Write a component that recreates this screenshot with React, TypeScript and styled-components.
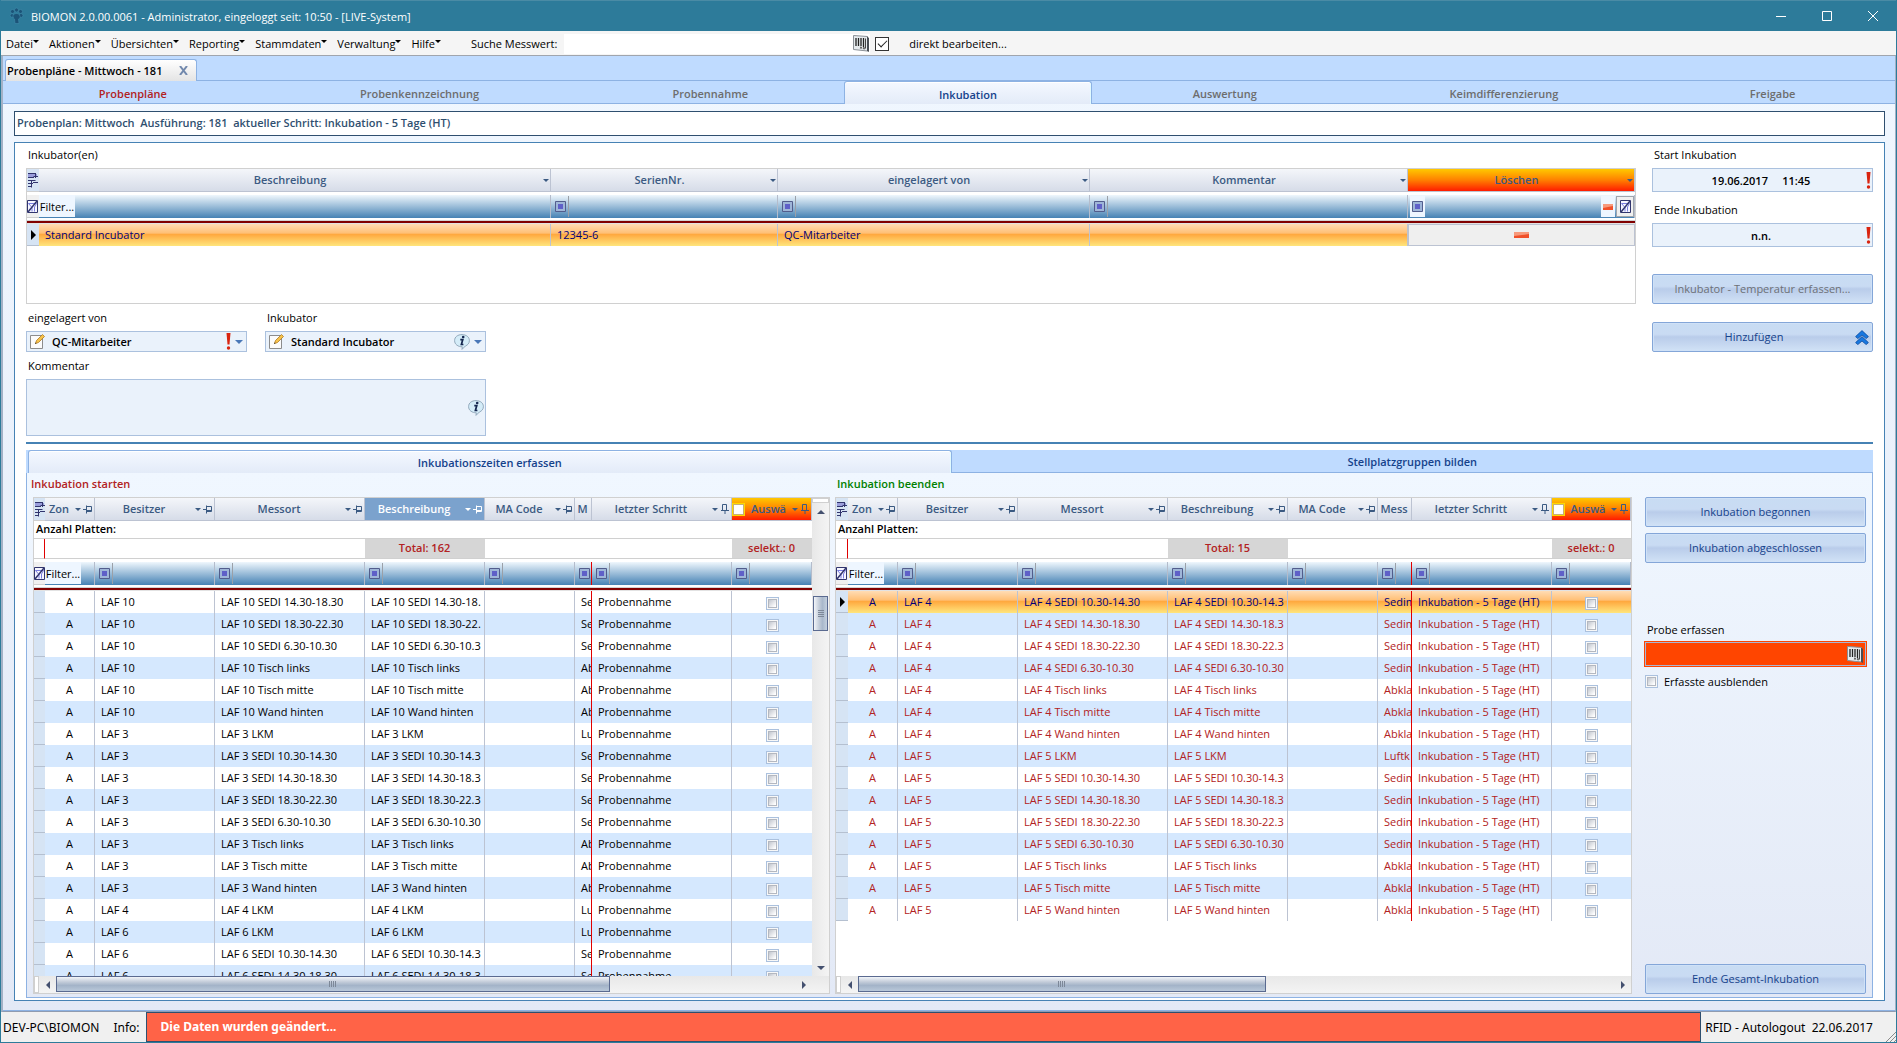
import React from "react";
import styled, { createGlobalStyle, css } from "styled-components";

const c = {
  teal: "#2d7b9a",
  navy: "#15428b",
  slate: "#2f4f6f",
  head: "#3b5a82",
  strip: "#bfdbff",
  line: "#8db2e3",
  grid: "#d0d0d0",
  col: "#bcc3d2",
  crimson: "#b22222",
  field: "#eaf2fb",
  fieldLine: "#abc1de",
};

const GlobalStyle = createGlobalStyle`
  * { box-sizing: border-box; }
  html, body { margin: 0; height: 100%; }
  body { overflow: hidden; }
  body, button, input, select, textarea {
    font-family: "Open Sans", "Noto Sans", sans-serif;
    font-size: 11px;
    color: #000;
  }
  button, input, select, textarea { margin: 0; padding: 0; border: 0; border-radius: 0; background: none; outline: 0; }
  svg { display: block; flex: none; }
`;

/* ---------- window frame ---------- */

const Window = styled.div`
  display: flex;
  flex-direction: column;
  height: 100vh;
  min-height: 800px;
  border: 1px solid ${c.teal};
  border-top: 0;
  background: #f0f0f0;
`;

const TitleBar = styled.header`
  display: flex;
  align-items: center;
  height: 31px;
  flex: none;
  padding-left: 8px;
  gap: 7px;
  background: ${c.teal};
  border-top: 1px solid #4a8ba5;
`;

const Title = styled.h1`
  flex: 1;
  margin: 0;
  font-size: 11px;
  font-weight: 400;
  color: #fff;
`;

const WindowButton = styled.button`
  display: flex;
  align-items: center;
  justify-content: center;
  width: 46px;
  height: 30px;
`;

const WindowButtons = styled.div`
  display: flex;
`;

const MenuBar = styled.nav`
  display: flex;
  align-items: center;
  height: 25px;
  flex: none;
  padding: 1px 0 0 5px;
  background: #f5f5f5;
  border-bottom: 1px solid #a0a5ad;
`;

const MenuButton = styled.button`
  display: flex;
  align-items: center;
  margin-right: 10px;
  line-height: 20px;
  svg { margin-bottom: 4px; }
`;

const SearchLabel = styled.label`
  margin-left: 20px;
  padding-right: 7px;
`;

const SearchBox = styled.div`
  display: flex;
  align-items: center;
  width: 306px;
  height: 20px;
  padding-right: 1px;
  background: #fff;
  input { flex: 1; min-width: 0; }
`;

const DirectEdit = styled.label`
  display: flex;
  align-items: center;
  gap: 20px;
  margin-left: 5px;
`;

const PlainCheck = styled.input`
  appearance: none;
  width: 14px;
  height: 14px;
  border: 1px solid #333;
  background: #fff;
  &:checked::after {
    content: "";
    display: block;
    width: 8px;
    height: 4px;
    margin: 2px;
    border-left: 1px solid #222;
    border-bottom: 1px solid #222;
    transform: rotate(-45deg);
  }
`;

const Workspace = styled.main`
  display: flex;
  flex-direction: column;
  flex: 1;
  min-height: 0;
  border-left: 2px solid #a3b1c6;
  border-right: 1px solid #a3b1c6;
  border-bottom: 1px solid #8f9bb0;
  background: linear-gradient(#f0f7ff, #e3e9f6);
`;

const DocStrip = styled.div`
  display: flex;
  align-items: flex-end;
  height: 25px;
  flex: none;
  padding-left: 2px;
  background: ${c.strip};
  border-bottom: 1px solid ${c.line};
`;

const DocTab = styled.div`
  display: flex;
  align-items: center;
  justify-content: space-between;
  width: 192px;
  height: 22px;
  margin-bottom: -1px;
  padding: 0 8px 0 1px;
  border: 1px solid ${c.line};
  border-bottom: 0;
  border-radius: 3px 3px 0 0;
  background: linear-gradient(#fff, #e4e4e4);
  font-weight: 600;
`;

const StepStrip = styled.div`
  display: flex;
  height: 23px;
  flex: none;
  background: ${c.strip};
`;

const StepTab = styled.button<{ $grow: number; $active?: boolean; $alert?: boolean; $navy?: boolean }>`
  flex: ${(p) => p.$grow} 1 0;
  min-width: 0;
  padding-top: 2px;
  font-weight: 600;
  color: ${(p) => (p.$active || p.$navy ? c.navy : p.$alert ? c.crimson : "#6d6d6d")};
  border-bottom: 1px solid ${c.line};
  ${(p) =>
    p.$active &&
    css`
      border: 1px solid ${c.line};
      border-bottom: 0;
      border-radius: 3px 3px 0 0;
      background: linear-gradient(#f4f8ff, #e3ebf8);
      box-shadow: inset 0 1px 0 #fff, inset -1px 0 0 #e2fbff;
    `}
`;

const Page = styled.div`
  display: flex;
  flex-direction: column;
  flex: 1;
  min-height: 0;
  padding: 7px 10px 9px 11px;
  gap: 6px;
  border-bottom: 1px solid ${c.line};
`;

const PlanInfo = styled.div`
  height: 25px;
  flex: none;
  padding-left: 2px;
  border: 1px solid ${c.slate};
  background: #fff;
  font-weight: 600;
  line-height: 22px;
  color: ${c.slate};
  white-space: pre;
`;

const Panel = styled.section`
  display: flex;
  flex-direction: column;
  flex: 1;
  min-height: 0;
  padding: 0 11px 2px;
  border: 1px solid #4682b4;
  background: #fff;
`;

/* ---------- upper half ---------- */

const UpperArea = styled.div`
  display: flex;
  flex: none;
  gap: 16px;
`;

const UpperMain = styled.div`
  flex: 1;
  min-width: 0;
`;

const UpperSide = styled.div`
  width: 221px;
  flex: none;
`;

const Label = styled.label`
  display: flex;
  align-items: center;
  height: 27px;
  padding-left: 2px;
  line-height: 16px;
`;

const TopLabel = styled(Label)`
  height: 25px;
  padding-bottom: 2px;
`;

const SideLabel = styled(Label)`
  height: 31px;
  padding-top: 5px;
`;

const Fields = styled.div`
  display: grid;
  grid-template-columns: 221px 221px;
  column-gap: 18px;
`;

const Wide = styled.div`
  grid-column: 1 / -1;
`;

const FieldBox = styled.div<{ $height: number }>`
  display: flex;
  align-items: center;
  height: ${(p) => p.$height}px;
  padding: 0 1px 0 3px;
  border: 1px solid ${c.fieldLine};
  background: ${c.field};
  input, select, textarea {
    flex: 1;
    min-width: 0;
    appearance: none;
    font-weight: 600;
  }
  select { padding-left: 7px; }
  input { text-align: center; }
  textarea { height: 100%; resize: none; }
`;

const FieldArrow = styled.span`
  display: flex;
  margin: 0 2px 0 4px;
`;

const ActionButton = styled.button<{ $space?: number }>`
  display: flex;
  align-items: center;
  width: 100%;
  height: 30px;
  flex: none;
  margin-top: ${(p) => p.$space ?? 0}px;
  border: 1px solid #84a6d8;
  border-radius: 2px;
  background: linear-gradient(#c8dcf3 0%, #c9dbf3 40%, #b9ccea 50%, #d1e2f6 100%);
  box-shadow: inset 0 0 0 1px #cfe1f7;
  color: ${c.navy};
  &:disabled { color: #6d7076; }
  span { flex: 1; padding-bottom: 2px; }
  svg { margin-right: 3px; }
`;

const Divider = styled.hr`
  width: 100%;
  height: 2px;
  flex: none;
  margin: 6px 0;
  border: 0;
  background: #4682b4;
`;

/* ---------- lower half ---------- */

const SubTabs = styled.div`
  display: flex;
  flex: none;
  height: 23px;
  padding-left: 2px;
  background: ${c.strip};
  button { padding-top: 0; }
`;

const TabBody = styled.div`
  display: flex;
  flex: 1;
  min-height: 0;
  padding: 0 6px 3px;
  border: 1px solid ${c.line};
  border-top: 0;
  background: linear-gradient(#f0f7ff, #e3e9f6);
`;

const GridColumn = styled.section`
  display: flex;
  flex-direction: column;
  flex: 1 1 0;
  min-width: 0;
  & + & { margin-left: 5px; }
`;

const GridTitle = styled.h2<{ $color: string; $indent: number }>`
  height: 24px;
  flex: none;
  margin: 0 0 0 ${(p) => p.$indent}px;
  font-size: 11px;
  font-weight: 600;
  line-height: 22px;
  color: ${(p) => p.$color};
`;

const SideColumn = styled.aside`
  display: flex;
  flex-direction: column;
  width: 221px;
  flex: none;
  margin-left: 13px;
  padding-top: 24px;
`;

const ProbeLabel = styled(Label)`
  margin-top: 54px;
  height: 25px;
`;

const ProbeBox = styled.div`
  display: flex;
  align-items: center;
  height: 24px;
  padding: 0 2px;
  border: 1px solid #a9b6d4;
  outline: 1px solid #ff4500;
  background: #ff4500;
  input { flex: 1; min-width: 0; }
`;

const HideLabel = styled.label`
  display: flex;
  align-items: center;
  gap: 6px;
  margin-top: 8px;
`;

const Spacer = styled.div`
  flex: 1;
`;

/* ---------- data grid ---------- */

const GridFrame = styled.div<{ $height?: number }>`
  display: flex;
  flex-direction: column;
  ${(p) => (p.$height ? `height: ${p.$height}px;` : "flex: 1; min-height: 0;")}
  border: 1px solid ${c.grid};
  background: #fff;
`;

const GridView = styled.div`
  display: flex;
  flex: 1;
  min-height: 0;
`;

const GridClip = styled.div`
  flex: 1;
  min-width: 0;
  overflow: hidden;
`;

const Table = styled.table`
  width: 100%;
  table-layout: fixed;
  border-collapse: separate;
  border-spacing: 0;
  th, td { padding: 0; overflow: hidden; white-space: nowrap; text-align: left; }
`;

type Tone = "normal" | "selected" | "alert";

const HeadCell = styled.th<{ $tone?: Tone }>`
  height: 23px;
  border-right: 1px solid ${c.col};
  border-bottom: 1px solid ${c.col};
  font-weight: 600;
  color: ${(p) => (p.$tone === "selected" ? "#fff" : c.head)};
  background: ${(p) =>
    p.$tone === "selected"
      ? "#7ba2cd"
      : p.$tone === "alert"
      ? "linear-gradient(#ffc800, #ff8000 50%, #ff1c00)"
      : "linear-gradient(#f4f6fa, #d6dce8)"};
`;

const HeadInner = styled.div`
  display: flex;
  align-items: center;
  gap: 2px;
  height: 22px;
  padding-right: 1px;
`;

const HeadText = styled.span`
  flex: 1;
  min-width: 0;
  overflow: hidden;
  text-align: center;
  line-height: 18px;
`;

const CornerCell = styled.th<{ $light?: boolean }>`
  height: 22px;
  border-bottom: 1px solid ${c.grid};
  background: ${(p) => (p.$light ? "#f0f0f0" : "#d6e4f4")};
`;

const HeadCheck = styled.input`
  appearance: none;
  width: 13px;
  height: 13px;
  flex: none;
  border: 1px solid #ffd800;
  background: #fff;
  box-shadow: inset 0 0 0 1px #c8b070;
`;

const SummaryTitle = styled.td`
  height: 18px;
  border-bottom: 1px solid ${c.grid};
  font-weight: 600;
  line-height: 15px;
  && { padding: 0 0 2px 2px; }
`;

const SummaryCell = styled.td<{ $filled?: boolean; $mark?: boolean }>`
  height: 20px;
  border-bottom: 1px solid ${c.grid};
  font-weight: 600;
  line-height: 16px;
  color: ${c.crimson};
  && { text-align: center; padding-bottom: 2px; }
  ${(p) => p.$filled && "background: #d6d6d6; border-right: 1px solid #d6d6d6;"}
  ${(p) => p.$mark && "border-right: 1px solid #e00000;"}
`;

const GapCell = styled.td`
  height: 3px;
`;

const RuleCell = styled.td`
  height: 6px;
  background: linear-gradient(#fff 0 2px, #d3d3d3 2px 3px, #800000 3px 5px, #e2e2e2 5px 6px);
`;

const FilterCell = styled.td<{ $freeze?: boolean }>`
  height: 23px;
  border-right: 1px solid ${(p) => (p.$freeze ? "#e00000" : "#b4bccb")};
  background: linear-gradient(#eff7fd, #4682b4);
`;

const FilterInner = styled.div`
  display: flex;
  align-items: center;
  height: 23px;
`;

const FilterText = styled.button`
  height: 23px;
  width: 36px;
  background: #eef6ff;
  border-bottom: 1px solid #4682b4;
`;

const FilterButton = styled.button<{ $lit?: boolean }>`
  display: flex;
  align-items: center;
  justify-content: flex-end;
  width: 18px;
  height: 21px;
  flex: none;
  padding-right: 2px;
  border-right: 1px solid #9aa0a8;
  ${(p) => p.$lit && "background: #eef6ff; margin-left: 2px; width: 15px; border: 0;"}
`;

const FilterTools = styled.div`
  display: flex;
  gap: 1px;
  margin-left: auto;
  button {
    display: flex;
    align-items: center;
    justify-content: center;
    height: 21px;
    width: 14px;
    background: #eef6ff;
  }
  button + button { width: 18px; background: #f0f0f0; border: 1px solid #a0a5ad; }
`;

const Row = styled.tr<{ $alt?: boolean; $current?: boolean; $ink: string }>`
  color: ${(p) => p.$ink};
  background: ${(p) =>
    p.$current
      ? "linear-gradient(#ffdcb4, #ffbf74 42%, #ffa73d 46%, #ffc35a 70%, #ffe57c)"
      : p.$alt
      ? "#d5e8fe"
      : "#fff"};
`;

const Cell = styled.td<{ $center?: boolean; $freeze?: boolean }>`
  height: 22px;
  line-height: 20px;
  border-right: 1px solid ${(p) => (p.$freeze ? "#e00000" : c.col)};
  &:last-child { border-right: 0; }
  && { padding-left: 6px; }
  ${(p) => p.$center && "&& { padding-left: 0; text-align: center; }"}
`;

const RowHead = styled.th`
  height: 22px;
  background: #d6e4f4;
  border-bottom: 1px solid #b5c0d0;
`;

const RowCheck = styled.input`
  appearance: none;
  display: inline-block;
  width: 13px;
  height: 13px;
  vertical-align: middle;
  border: 1px solid #abc1de;
  outline: 1px solid #b4b8c0;
  outline-offset: -3px;
  background: linear-gradient(135deg, #c4c8d0 20%, #fff 75%);
  box-shadow: inset 0 0 0 1px #f8f8f8;
`;

const DeleteButton = styled.button`
  display: flex;
  align-items: center;
  justify-content: center;
  width: 100%;
  height: 22px;
  background: #efefef;
  border: 1px solid ${c.col};
`;

/* ---------- scroll bars ---------- */

const VBar = styled.div`
  display: flex;
  flex-direction: column;
  width: 17px;
  background: linear-gradient(90deg, #e8e8e8, #f4f4f4);
`;

const HBar = styled.div<{ $corner?: boolean }>`
  display: flex;
  height: 17px;
  flex: none;
  padding-right: ${(p) => (p.$corner ? 17 : 0)}px;
  background: linear-gradient(#e8e8e8, #f4f4f4);
`;

const Splitter = styled.span<{ $vertical?: boolean }>`
  ${(p) => (p.$vertical ? "height: 5px;" : "width: 5px;")}
  flex: none;
  border: 1px solid ${c.grid};
  background: #fff;
`;

const ArrowButton = styled.button`
  display: flex;
  align-items: center;
  justify-content: center;
  width: 17px;
  height: 17px;
  flex: none;
`;

const Track = styled.div`
  flex: 1;
  display: flex;
`;

const HThumb = styled.div<{ $size: number }>`
  display: flex;
  align-items: center;
  justify-content: center;
  width: ${(p) => p.$size}%;
  height: 16px;
  border: 1px solid #5a6a90;
  background: linear-gradient(#f2f5f9, #c3ccd9 35%, #a3b3c8 60%, #b9c8d9);
`;

const VTrack = styled.div`
  flex: 1;
  padding-top: 76px;
`;

const VThumb = styled.div`
  display: flex;
  align-items: center;
  justify-content: center;
  width: 15px;
  height: 35px;
  margin-left: 1px;
  border: 1px solid #5a6a90;
  background: linear-gradient(90deg, #f2f5f9, #c3ccd9 40%, #a9b8cb 65%, #c4d0de);
`;

/* ---------- status bar ---------- */

const StatusBar = styled.footer`
  display: flex;
  align-items: center;
  height: 30px;
  flex: none;
  padding-left: 2px;
  font-family: "Noto Sans", "Open Sans", sans-serif;
  font-size: 12px;
  white-space: pre;
`;

const StatusMessage = styled.div`
  flex: 1;
  height: 30px;
  margin: 0 4px 0 6px;
  padding-left: 14px;
  border: 1px solid ${c.slate};
  background: #ff6347;
  color: #fff;
  font-weight: 700;
  line-height: 28px;
`;

const StatusInfo = styled.span`
  margin-left: 14px;
`;

const SizeGrip = styled.span`
  align-self: flex-end;
  margin-left: 12px;
`;

/* ---------- drawings ---------- */

const Logo = () => (
  <svg width="15" height="18" viewBox="0 0 15 18" fill="#1c5478" stroke="#3f8cab" strokeWidth="0.6">
    <circle cx="3.500" cy="4.500" r="2" />
    <circle cx="7.500" cy="3" r="2" />
    <circle cx="11.500" cy="4.500" r="2" />
    <circle cx="12" cy="8.500" r="2" />
    <circle cx="3" cy="8.500" r="1.800" />
    <path d="M4.500 7.500c2-1.500 5-1.500 6 .5s1 3-1 4l.5 4.500H6L5.500 12c-1.500-1-2-3-1-4.500z" />
  </svg>
);

const Caret = ({ color = c.head, w = 7 }: { color?: string; w?: number }) => (
  <svg width={w} height={w > 7 ? 4 : 3} viewBox="0 0 8 4" preserveAspectRatio="none" fill={color}>
    <path d="M0 0h8L4 4z" />
  </svg>
);

const Pin = ({ down, color = c.head }: { down?: boolean; color?: string }) => (
  <svg width="10" height="10" viewBox="0 0 10 10" fill="none" stroke={color}>
    {down ? (
      <path d="M2.500 6V.5h4V6M1 6.500h8M5 6.500V10M6.500 1v5" />
    ) : (
      <path d="M0 5.500h3.500M3.500 1.500v8M3.500 2.500h5v5h-5M3.500 6.500h5" />
    )}
  </svg>
);

const ChooserIcon = () => (
  <svg width="11" height="20" viewBox="0 0 11 20" fill="none" stroke="#31356e">
    <path d="M1 5.500h9" stroke="#9a9edc" strokeWidth="3" />
    <path d="M1 3.500h8M1 7.500h6M8.500 4v4M6.500 6.500H11M1 10.500h7.500M1 13.500h5M4.500 10.500v7M1 16.500h4M6 12.500h5" />
  </svg>
);

const ClearFilterIcon = () => (
  <svg width="11" height="13" viewBox="0 0 11 13" fill="none" stroke="#31356e">
    <path d="M.5.500h10v12H.5z" fill="#f6f6ff" />
    <path d="M1.500 3.500h8L7.500 7v4.500M1.500 3.500L5 7.500v4" stroke="#7a7ee0" />
    <path d="M1 12L10 1" strokeWidth="1.500" />
  </svg>
);

const OperatorIcon = () => (
  <svg width="11" height="11" viewBox="0 0 11 11">
    <path d="M.5.500h10v10H.5z" fill="#9fb6d8" stroke="#525d8c" />
    <path d="M3 3h5v5H3z" fill="#5f60c8" />
  </svg>
);

const MinusIcon = ({ w = 15 }: { w?: number }) => (
  <svg width={w} height="6" viewBox="0 0 15 6" preserveAspectRatio="none">
    <path d="M0 0h15v6H0z" fill="#f0502a" />
    <path d="M0 0h15v2L0 4z" fill="#f79a7c" />
  </svg>
);

const RowMarker = () => (
  <svg width="11" height="10" viewBox="0 0 11 10">
    <path d="M4 0l5 5-5 5z" />
  </svg>
);

const BarcodeIcon = () => (
  <svg width="16" height="17" viewBox="0 0 16 17">
    <path d="M.5.500l14 1v14.500l-14-1.500z" fill="#e6ebee" stroke="#8a9096" />
    <path d="M14 1.500L16 3v14l-2-1z" fill="#4a4f55" />
    <path d="M3 3v8M5.500 3v8M8 3v8M10.500 3v9" stroke="#222" strokeWidth="1.300" />
    <path d="M12.500 3.500v10" stroke="#444" />
    <path d="M7 12.500l5 1" stroke="#666" strokeWidth="2" strokeDasharray="2 1" />
  </svg>
);

const EditIcon = () => (
  <svg width="15" height="15" viewBox="0 0 15 15">
    <path d="M.5 1.500h12v13H.5z" fill="#fbfbfb" stroke="#8c8c8c" />
    <path d="M5.500 9.500l1-3 6-6 2 2-6 6z" fill="#f6c24a" stroke="#b07a20" strokeWidth="0.8" />
    <path d="M5 10l1.500-.5-1-1z" fill="#333" />
  </svg>
);

const AlertIcon = () => (
  <svg width="5" height="17" viewBox="0 0 5 17" fill="#d9240f">
    <path d="M.5 0h4l-1 11.500h-2z" />
    <circle cx="2.500" cy="15" r="1.700" />
  </svg>
);

const InfoIcon = () => (
  <svg width="16" height="16" viewBox="0 0 16 16">
    <path
      d="M8 .6c4.200 0 7.400 2.400 7.400 6 0 2.500-1.600 4.500-4 5.400L8 15.400l.3-2.600C4 12.800.6 10.400.6 6.600S3.800.6 8 .6z"
      fill="#d4ecf8"
      stroke="#8aa2b4"
      strokeWidth="0.9"
    />
    <circle cx="9.200" cy="3" r="1.300" fill="#14264e" />
    <path d="M6.300 5.600h2.500L7.400 10.500h2" fill="none" stroke="#14264e" strokeWidth="1.700" />
  </svg>
);

const ChevronsIcon = () => (
  <svg width="14" height="15" viewBox="0 0 14 15" fill="#1878e0" stroke="#0b4a9e" strokeWidth="0.8">
    <path d="M7 .6l6.400 6-2.200 2L7 5 2.800 8.600l-2.200-2z" />
    <path d="M7 6.600l6.400 6-2.200 2L7 11l-4.200 3.600-2.200-2z" />
  </svg>
);

const Arrow = ({ dir }: { dir: "up" | "down" | "left" | "right" }) => {
  const d = {
    up: "M1 7l4-4 4 4z",
    down: "M1 3l4 4 4-4z",
    left: "M7 1L3 5l4 4z",
    right: "M3 1l4 4-4 4z",
  }[dir];
  return (
    <svg width="10" height="10" viewBox="0 0 10 10" fill="#44506f">
      <path d={d} />
    </svg>
  );
};

const Ribs = ({ vertical }: { vertical?: boolean }) => (
  <svg width="8" height="8" viewBox="0 0 8 8" stroke="#7d8898">
    {vertical ? <path d="M1 .5h6M1 2.500h6M1 4.500h6M1 6.500h6" /> : <path d="M.5 1v6M2.500 1v6M4.500 1v6M6.500 1v6" />}
  </svg>
);

const Grip = () => (
  <svg width="11" height="11" viewBox="0 0 11 11" stroke="#8a8a8a">
    <path d="M1 11L11 1M5 11l6-6M9 11l2-2" />
  </svg>
);

/* ---------- data ---------- */

type Sample = { owner: string; place: string; kind: string };

const kindOf = (suffix: string) =>
  suffix === "LKM" ? "Luftke" : suffix.startsWith("SEDI") ? "Sedim" : "Abkla";

const samples = (owner: string, suffixes: string[]): Sample[] =>
  suffixes.map((s) => ({ owner, place: `${owner} ${s}`, kind: kindOf(s) }));

const SEDI = ["SEDI 10.30-14.30", "SEDI 14.30-18.30", "SEDI 18.30-22.30", "SEDI 6.30-10.30"];
const CONTACT = ["Tisch links", "Tisch mitte", "Wand hinten"];

const startRows = [
  ...samples("LAF 10", [...SEDI.slice(1), ...CONTACT]),
  ...samples("LAF 3", ["LKM", ...SEDI, ...CONTACT]),
  ...samples("LAF 4", ["LKM"]),
  ...samples("LAF 6", ["LKM", ...SEDI.slice(0, 2)]),
];

const endRows = [
  ...samples("LAF 4", [...SEDI, ...CONTACT]),
  ...samples("LAF 5", ["LKM", ...SEDI, ...CONTACT]),
];

const menu = ["Datei", "Aktionen", "Übersichten", "Reporting", "Stammdaten", "Verwaltung", "Hilfe"];

const steps = [
  { name: "Probenpläne", grow: 260, alert: true },
  { name: "Probenkennzeichnung", grow: 314 },
  { name: "Probennahme", grow: 268 },
  { name: "Inkubation", grow: 246, active: true },
  { name: "Auswertung", grow: 266 },
  { name: "Keimdifferenzierung", grow: 293 },
  { name: "Freigabe", grow: 245 },
];

/* ---------- grids ---------- */

const Operator = ({ lit }: { lit?: boolean }) => (
  <FilterButton $lit={lit} aria-label="Filteroperator">
    <OperatorIcon />
  </FilterButton>
);

const IncubatorGrid = () => {
  const heads = ["Beschreibung", "SerienNr.", "eingelagert von", "Kommentar", "Löschen"];
  return (
    <GridFrame $height={136}>
      <GridClip>
        <Table>
          <colgroup>
            <col width="12" />
            <col />
            <col width="227" />
            <col width="312" />
            <col width="318" />
            <col width="227" />
          </colgroup>
          <thead>
            <tr>
              <CornerCell>
                <ChooserIcon />
              </CornerCell>
              {heads.map((h) => (
                <HeadCell key={h} $tone={h === "Löschen" ? "alert" : "normal"}>
                  <HeadInner>
                    <HeadText>{h}</HeadText>
                    <Caret w={6} />
                  </HeadInner>
                </HeadCell>
              ))}
            </tr>
          </thead>
          <tbody>
            <tr>
              <GapCell colSpan={6} />
            </tr>
            <tr>
              <CornerCell $light>
                <ClearFilterIcon />
              </CornerCell>
              <FilterCell>
                <FilterInner>
                  <FilterText>Filter...</FilterText>
                </FilterInner>
              </FilterCell>
              {[0, 1, 2].map((i) => (
                <FilterCell key={i}>
                  <FilterInner>
                    <Operator />
                  </FilterInner>
                </FilterCell>
              ))}
              <FilterCell>
                <FilterInner>
                  <Operator lit />
                  <FilterTools>
                    <button aria-label="Löschen">
                      <MinusIcon w={10} />
                    </button>
                    <button aria-label="Filter löschen">
                      <ClearFilterIcon />
                    </button>
                  </FilterTools>
                </FilterInner>
              </FilterCell>
            </tr>
            <tr>
              <RuleCell colSpan={6} />
            </tr>
            <Row $current $ink="#00007a">
              <RowHead scope="row">
                <RowMarker />
              </RowHead>
              <Cell>Standard Incubator</Cell>
              <Cell>12345-6</Cell>
              <Cell>QC-Mitarbeiter</Cell>
              <Cell />
              <td>
                <DeleteButton aria-label="Inkubator löschen">
                  <MinusIcon />
                </DeleteButton>
              </td>
            </Row>
          </tbody>
        </Table>
      </GridClip>
    </GridFrame>
  );
};

type SampleGridProps = {
  rows: Sample[];
  total: number;
  headWidth: number;
  kindHead: string;
  kindWidth: number;
  kindChars: number;
  step: string;
  ink: string;
  thumb: number;
  selectedHead?: boolean;
  current?: number;
  vertical?: boolean;
};

const SampleGrid = (p: SampleGridProps) => {
  const heads: { name: string; tone?: Tone }[] = [
    { name: "Zon" },
    { name: "Besitzer" },
    { name: "Messort" },
    { name: "Beschreibung", tone: p.selectedHead ? "selected" : "normal" },
    { name: "MA Code" },
  ];
  return (
    <GridFrame>
      <GridView>
        <GridClip>
          <Table>
            <colgroup>
              <col width={p.headWidth} />
              <col width="50" />
              <col width="120" />
              <col width="150" />
              <col width="120" />
              <col width="90" />
              <col width={p.kindWidth} />
              <col width="140" />
              <col />
            </colgroup>
            <thead>
              <tr>
                <CornerCell>
                  <ChooserIcon />
                </CornerCell>
                {heads.map((h) => (
                  <HeadCell key={h.name} $tone={h.tone}>
                    <HeadInner>
                      <HeadText>{h.name}</HeadText>
                      <Caret w={6} color={h.tone === "selected" ? "#fff" : undefined} />
                      <Pin color={h.tone === "selected" ? "#fff" : undefined} />
                    </HeadInner>
                  </HeadCell>
                ))}
                <HeadCell>
                  <HeadInner>
                    <HeadText>{p.kindHead}</HeadText>
                  </HeadInner>
                </HeadCell>
                <HeadCell>
                  <HeadInner>
                    <HeadText>letzter Schritt</HeadText>
                    <Caret w={6} />
                    <Pin down />
                  </HeadInner>
                </HeadCell>
                <HeadCell $tone="alert">
                  <HeadInner>
                    <HeadCheck type="checkbox" aria-label="Alle auswählen" />
                    <HeadText>Auswä</HeadText>
                    <Caret w={6} />
                    <Pin down />
                  </HeadInner>
                </HeadCell>
              </tr>
            </thead>
            <tbody>
              <tr>
                <SummaryTitle colSpan={9}>Anzahl Platten:</SummaryTitle>
              </tr>
              <tr>
                <SummaryCell $mark />
                <SummaryCell colSpan={3} />
                <SummaryCell $filled>Total: {p.total}</SummaryCell>
                <SummaryCell colSpan={3} />
                <SummaryCell $filled>selekt.: 0</SummaryCell>
              </tr>
              <tr>
                <GapCell colSpan={9} />
              </tr>
              <tr>
                <CornerCell $light>
                  <ClearFilterIcon />
                </CornerCell>
                <FilterCell>
                  <FilterInner>
                    <FilterText>Filter...</FilterText>
                  </FilterInner>
                </FilterCell>
                {[0, 1, 2, 3, 4, 5, 6].map((i) => (
                  <FilterCell key={i} $freeze={i === 4}>
                    <FilterInner>
                      <Operator />
                    </FilterInner>
                  </FilterCell>
                ))}
              </tr>
              <tr>
                <RuleCell colSpan={9} />
              </tr>
              {p.rows.map((r, i) => (
                <Row key={r.place} $alt={i % 2 === 1} $current={i === p.current} $ink={i === p.current ? "#00007a" : p.ink}>
                  <RowHead scope="row">{i === p.current && <RowMarker />}</RowHead>
                  <Cell $center>A</Cell>
                  <Cell>{r.owner}</Cell>
                  <Cell>{r.place}</Cell>
                  <Cell>{r.place.slice(0, 21)}</Cell>
                  <Cell />
                  <Cell $freeze>{r.kind.slice(0, p.kindChars)}</Cell>
                  <Cell>{p.step}</Cell>
                  <Cell $center>
                    <RowCheck type="checkbox" aria-label={`${r.place} auswählen`} />
                  </Cell>
                </Row>
              ))}
            </tbody>
          </Table>
        </GridClip>
        {p.vertical && (
          <VBar>
            <Splitter $vertical />
            <ArrowButton aria-label="Nach oben">
              <Arrow dir="up" />
            </ArrowButton>
            <VTrack>
              <VThumb>
                <Ribs vertical />
              </VThumb>
            </VTrack>
            <ArrowButton aria-label="Nach unten">
              <Arrow dir="down" />
            </ArrowButton>
          </VBar>
        )}
      </GridView>
      <HBar $corner={p.vertical}>
        <Splitter />
        <ArrowButton aria-label="Nach links">
          <Arrow dir="left" />
        </ArrowButton>
        <Track>
          <HThumb $size={p.thumb}>
            <Ribs />
          </HThumb>
        </Track>
        <ArrowButton aria-label="Nach rechts">
          <Arrow dir="right" />
        </ArrowButton>
      </HBar>
    </GridFrame>
  );
};

/* ---------- page ---------- */

export default function App() {
  return (
    <>
      <GlobalStyle />
      <Window>
        <TitleBar>
          <Logo />
          <Title>BIOMON 2.0.00.0061 - Administrator, eingeloggt seit: 10:50 - [LIVE-System]</Title>
          <WindowButtons>
            <WindowButton aria-label="Minimieren">
              <svg width="10" height="10" viewBox="0 0 10 10" stroke="#fff">
                <path d="M0 5.500h10" />
              </svg>
            </WindowButton>
            <WindowButton aria-label="Maximieren">
              <svg width="10" height="10" viewBox="0 0 10 10" stroke="#fff" fill="none">
                <path d="M.5.500h9v9h-9z" />
              </svg>
            </WindowButton>
            <WindowButton aria-label="Schließen">
              <svg width="10" height="10" viewBox="0 0 10 10" stroke="#fff">
                <path d="M0 0l10 10M10 0L0 10" />
              </svg>
            </WindowButton>
          </WindowButtons>
        </TitleBar>
        <MenuBar>
          {menu.map((m) => (
            <MenuButton key={m}>
              {m}
              <Caret color="#000" w={6} />
            </MenuButton>
          ))}
          <SearchLabel htmlFor="search">Suche Messwert:</SearchLabel>
          <SearchBox>
            <input id="search" />
            <BarcodeIcon />
          </SearchBox>
          <DirectEdit>
            <PlainCheck type="checkbox" defaultChecked />
            direkt bearbeiten...
          </DirectEdit>
        </MenuBar>
        <Workspace>
          <DocStrip>
            <DocTab>
              Probenpläne - Mittwoch - 181
              <button aria-label="Tab schließen">
                <svg width="9" height="9" viewBox="0 0 9 9" stroke="#7289ad" strokeWidth="2">
                  <path d="M1 0l7 9M8 0L1 9" />
                </svg>
              </button>
            </DocTab>
          </DocStrip>
          <StepStrip role="tablist">
            {steps.map((s) => (
              <StepTab key={s.name} role="tab" aria-selected={!!s.active} $grow={s.grow} $active={s.active} $alert={s.alert}>
                {s.name}
              </StepTab>
            ))}
          </StepStrip>
          <Page>
            <PlanInfo>{"Probenplan: Mittwoch  Ausführung: 181  aktueller Schritt: Inkubation - 5 Tage (HT)"}</PlanInfo>
            <Panel>
              <UpperArea>
                <UpperMain>
                  <TopLabel as="div">Inkubator(en)</TopLabel>
                  <IncubatorGrid />
                  <Fields>
                    <div>
                      <Label htmlFor="storedBy">eingelagert von</Label>
                      <FieldBox $height={21}>
                        <EditIcon />
                        <select id="storedBy">
                          <option>QC-Mitarbeiter</option>
                        </select>
                        <AlertIcon />
                        <FieldArrow>
                          <Caret color="#4a78b8" w={8} />
                        </FieldArrow>
                      </FieldBox>
                    </div>
                    <div>
                      <Label htmlFor="incubator">Inkubator</Label>
                      <FieldBox $height={21}>
                        <EditIcon />
                        <select id="incubator">
                          <option>Standard Incubator</option>
                        </select>
                        <InfoIcon />
                        <FieldArrow>
                          <Caret color="#4a78b8" w={8} />
                        </FieldArrow>
                      </FieldBox>
                    </div>
                    <Wide>
                      <Label htmlFor="comment">Kommentar</Label>
                      <FieldBox $height={57}>
                        <textarea id="comment" />
                        <InfoIcon />
                      </FieldBox>
                    </Wide>
                  </Fields>
                </UpperMain>
                <UpperSide>
                  <TopLabel htmlFor="start">Start Inkubation</TopLabel>
                  <FieldBox $height={24}>
                    <input id="start" defaultValue="19.06.2017     11:45" />
                    <AlertIcon />
                  </FieldBox>
                  <SideLabel htmlFor="end">Ende Inkubation</SideLabel>
                  <FieldBox $height={24}>
                    <input id="end" defaultValue="n.n." />
                    <AlertIcon />
                  </FieldBox>
                  <ActionButton disabled $space={27}>
                    <span>Inkubator - Temperatur erfassen...</span>
                  </ActionButton>
                  <ActionButton $space={18}>
                    <span>Hinzufügen</span>
                    <ChevronsIcon />
                  </ActionButton>
                </UpperSide>
              </UpperArea>
              <Divider />
              <SubTabs role="tablist">
                <StepTab role="tab" aria-selected $grow={1} $active>
                  Inkubationszeiten erfassen
                </StepTab>
                <StepTab role="tab" aria-selected={false} $grow={1} $navy>
                  Stellplatzgruppen bilden
                </StepTab>
              </SubTabs>
              <TabBody>
                <GridColumn>
                  <GridTitle $color={c.crimson} $indent={-2}>
                    Inkubation starten
                  </GridTitle>
                  <SampleGrid
                    rows={startRows}
                    total={162}
                    headWidth={11}
                    kindHead="M"
                    kindWidth={17}
                    kindChars={2}
                    step="Probennahme"
                    ink="#000"
                    thumb={75}
                    selectedHead
                    vertical
                  />
                </GridColumn>
                <GridColumn>
                  <GridTitle $color="#008000" $indent={2}>
                    Inkubation beenden
                  </GridTitle>
                  <SampleGrid
                    rows={endRows}
                    total={15}
                    headWidth={12}
                    kindHead="Mess"
                    kindWidth={34}
                    kindChars={5}
                    step="Inkubation - 5 Tage (HT)"
                    ink={c.crimson}
                    thumb={54}
                    current={0}
                  />
                </GridColumn>
                <SideColumn>
                  <ActionButton>
                    <span>Inkubation begonnen</span>
                  </ActionButton>
                  <ActionButton $space={6}>
                    <span>Inkubation abgeschlossen</span>
                  </ActionButton>
                  <ProbeLabel htmlFor="probe">Probe erfassen</ProbeLabel>
                  <ProbeBox>
                    <input id="probe" />
                    <BarcodeIcon />
                  </ProbeBox>
                  <HideLabel>
                    <RowCheck type="checkbox" />
                    Erfasste ausblenden
                  </HideLabel>
                  <Spacer />
                  <ActionButton>
                    <span>Ende Gesamt-Inkubation</span>
                  </ActionButton>
                </SideColumn>
              </TabBody>
            </Panel>
          </Page>
        </Workspace>
        <StatusBar>
          DEV-PC\BIOMON
          <StatusInfo>Info:</StatusInfo>
          <StatusMessage role="status">Die Daten wurden geändert...</StatusMessage>
          {"RFID - Autologout  22.06.2017"}
          <SizeGrip>
            <Grip />
          </SizeGrip>
        </StatusBar>
      </Window>
    </>
  );
}
